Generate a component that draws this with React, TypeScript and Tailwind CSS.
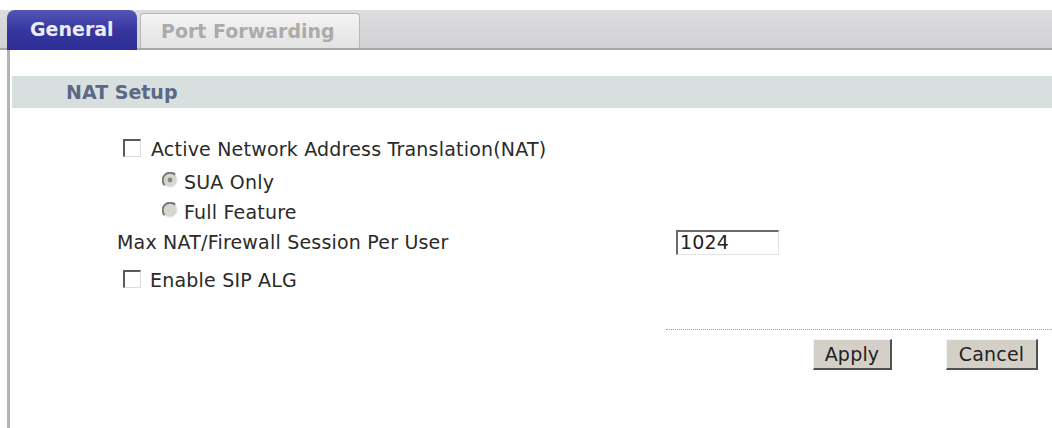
import React from 'react';

const font = { fontFamily: '"DejaVu Sans", Verdana, sans-serif' };

const Checkbox = () => (
  <span className="inline-block w-[18px] h-[18px] border-t-2 border-l-2 border-b border-r border-t-[#5a5a5a] border-l-[#5a5a5a] border-b-[#dcdcdc] border-r-[#dcdcdc] bg-white shrink-0" />
);

const Radio = ({ checked }: { checked?: boolean }) => (
  <svg width="16" height="16" viewBox="0 0 16 16" className="shrink-0 -mt-[4px]">
    <circle cx="8" cy="8" r="7.5" fill="#d9d6d0" />
    <path d="M2.7 13.3 A7.5 7.5 0 0 1 13.3 2.7" stroke="#777" strokeWidth="2" fill="none" />
    <path d="M13.3 2.7 A7.5 7.5 0 0 1 2.7 13.3" stroke="#f2f2f2" strokeWidth="1" fill="none" />
    {checked && <circle cx="8" cy="8" r="2.4" fill="#888" />}
  </svg>
);

const Button = ({ children, className }: { children: React.ReactNode; className?: string }) => (
  <button
    className={`h-[31px] bg-[#d4d0c8] border-t border-l border-t-[#f4f4f4] border-l-[#f4f4f4] border-b-2 border-r-2 border-b-[#505050] border-r-[#505050] text-[19px] tracking-[0.2px] text-[#222] ${className ?? ''}`}
    style={font}
  >
    {children}
  </button>
);

export default function App() {
  return (
    <div className="w-[1052px] h-[428px] bg-white overflow-hidden pt-[10px]" style={font}>
      {/* tab strip */}
      <div className="flex h-[40px] bg-gradient-to-b from-[#dcdcde] to-[#d2d2d4] border-b-2 border-b-[#a8a8a8]">
        <div className="ml-[7px] w-[130px] h-[40px] rounded-t-[8px] bg-gradient-to-b from-[#5656b8] via-[#36369e] to-[#2e2e98] flex items-center pl-[23px] pb-[2px] text-[19px] font-bold text-[#ececf4]">
          General
        </div>
        <div className="ml-[3px] mt-[3px] w-[220px] h-[35px] rounded-t-[4px] border border-[#b8b8b8] border-b-0 bg-gradient-to-b from-[#f4f4f4] to-[#e2e2e2] flex items-center pl-[20px] text-[19px] font-bold text-[#ababab]">
          Port Forwarding
        </div>
      </div>

      {/* body */}
      <div className="ml-[7px] h-[378px] border-l-[3px] border-l-[#b4b4b4] pt-[26px]">
        <div className="ml-[2px] h-[32px] bg-[#d7e0df] flex items-center pl-[54px] text-[19px] font-bold text-[#5b6985]">
          NAT Setup
        </div>

        <div className="pl-[107px] pt-[23px] text-[19px] tracking-[0.2px] text-[#2a2a2a]">
          <div className="flex items-center h-[36px]">
            <span className="ml-[6px] flex -mt-[3px]">
              <Checkbox />
            </span>
            <span className="ml-[10px]">Active Network Address Translation(NAT)</span>
          </div>
          <div className="flex items-center gap-[6px] h-[30px] ml-[45px]">
            <Radio checked />
            <span>SUA Only</span>
          </div>
          <div className="flex items-center gap-[6px] h-[30px] ml-[45px]">
            <Radio />
            <span>Full Feature</span>
          </div>
          <div className="flex items-center h-[30px]">
            <span className="w-[559px]">Max NAT/Firewall Session Per User</span>
            <input
              defaultValue="1024"
              className="w-[103px] h-[25px] border-t-2 border-l-2 border-b border-r border-t-[#6a6a6a] border-l-[#6a6a6a] border-b-[#e4e4e4] border-r-[#e4e4e4] px-[2px] text-[19px] text-[#222] outline-none"
              style={font}
            />
          </div>
          <div className="flex items-center h-[46px]">
            <span className="ml-[6px] flex -mt-[3px]">
              <Checkbox />
            </span>
            <span className="ml-[9px]">Enable SIP ALG</span>
          </div>
        </div>

        <div className="ml-[656px] mt-[26px] border-t border-dotted border-t-[#a0a0a0]" />
        <div className="flex mt-[9px] ml-[803px] gap-[54px]">
          <Button className="w-[79px]">Apply</Button>
          <Button className="w-[92px]">Cancel</Button>
        </div>
      </div>
    </div>
  );
}
